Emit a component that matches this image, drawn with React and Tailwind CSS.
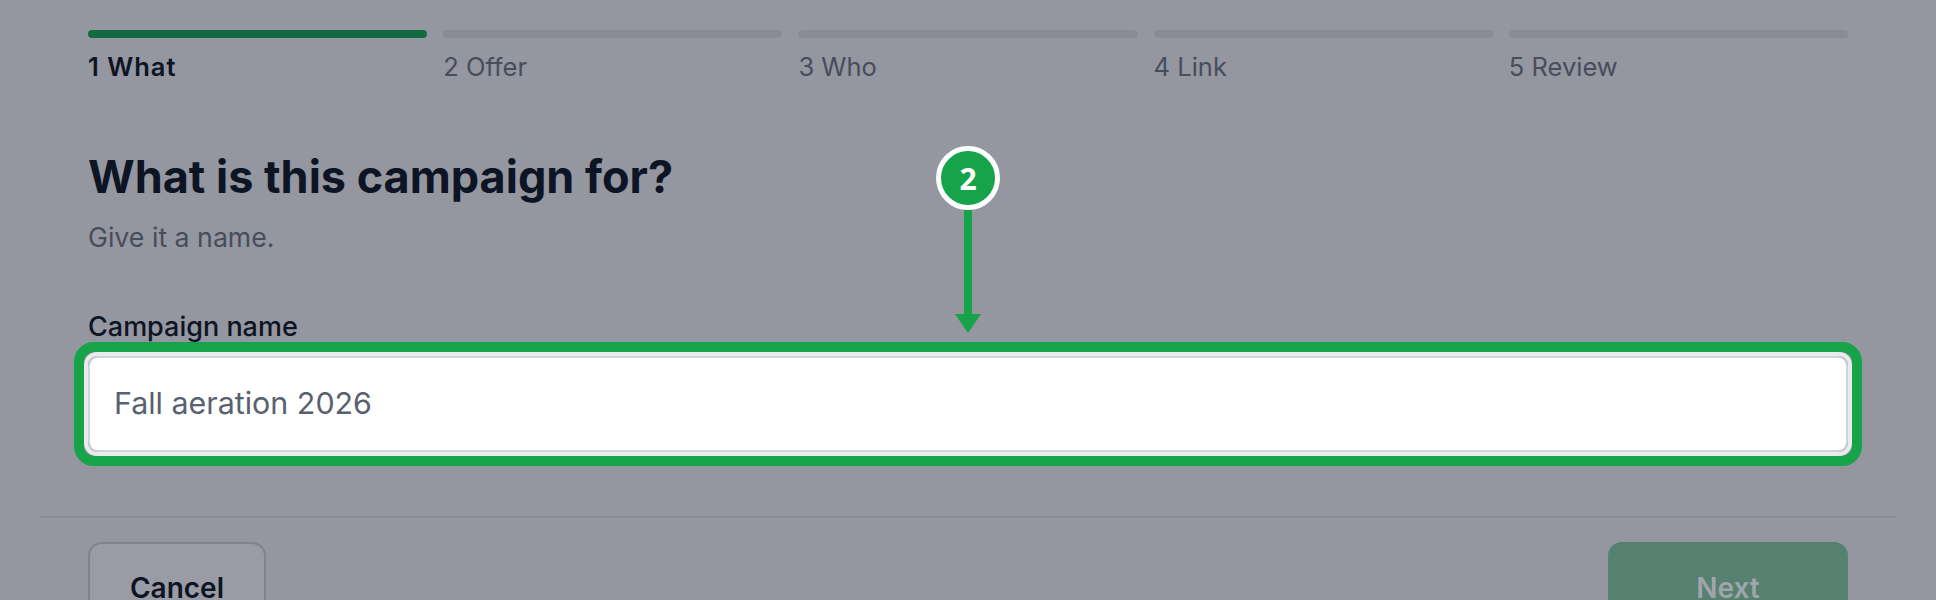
import React from 'react';

const steps = ['1 What', '2 Offer', '3 Who', '4 Link', '5 Review'];

export default function App() {
  return (
    <div className="h-[600px] overflow-hidden bg-[#9496a0] font-['Inter',sans-serif]">
      <div className="px-[88px] pt-[30px]">
        <div className="grid grid-cols-5 gap-4">
          {steps.map((label, i) => (
            <div key={label}>
              <div className={i === 0 ? 'h-2 rounded-full bg-[#116a41]' : 'h-2 rounded-full bg-[#898b95]'} />
              <div className={i === 0 ? 'mt-[13px] text-[25.5px] leading-[32px] tracking-[1px] font-semibold text-[#0d1423]' : 'mt-[13px] text-[25.5px] leading-[32px] text-[#474d5b]'}>
                {label}
              </div>
            </div>
          ))}
        </div>

        <h1 className="mt-[69px] text-[45px] leading-[50px] font-bold text-[#0d1423]">What is this campaign for?</h1>
        <p className="mt-[19px] text-[26.7px] leading-[32px] text-[#474d5b]">Give it a name.</p>

        <label className="block mt-[58px] text-[27px] leading-[32px] font-medium text-[#0d1423]">Campaign name</label>
        <div className="relative mt-[13px]">
          <input
            readOnly
            value="Fall aeration 2026"
            className="block w-full h-[96px] rounded-[10px] border-2 border-[#d1d5db] bg-white px-[24px] pb-[2px] text-[30.4px] text-[#596070] outline-none"
          />
          {/* annotation highlight */}
          <div className="absolute -inset-[14px] rounded-[20px] border-[10px] border-[#16a34a] pointer-events-none" />
          <div className="absolute -inset-[4px] rounded-[13px] border-[4px] border-[#e9ebee] pointer-events-none" />
        </div>

        <div className="-mx-12 mt-[64px] border-t-2 border-[#8a8c96]" />
        <div className="mt-[24px] flex justify-between">
          <button className="w-[178px] h-[92px] rounded-[14px] border-2 border-[#80838d] bg-[#9a9ca5] text-[28px] font-semibold text-[#0d1423]">Cancel</button>
          <button className="w-[240px] h-[92px] rounded-[14px] bg-[#56806f] text-[28px] font-semibold text-[#a0a5ab]">Next</button>
        </div>
      </div>

      {/* step marker + arrow */}
      <div className="absolute left-[936px] top-[146px] flex flex-col items-center w-16">
        <div className="flex h-16 w-16 items-center justify-center rounded-full border-[5px] border-white bg-[#16a34a] font-['Noto_Sans',sans-serif] text-[30px] font-bold text-white">2</div>
        <div className="h-[104px] w-2 bg-[#16a34a]" />
        <svg width="26" height="19" viewBox="0 0 26 19" className="block">
          <path d="M0 0H26L13 19Z" fill="#16a34a" />
        </svg>
      </div>
    </div>
  );
}
